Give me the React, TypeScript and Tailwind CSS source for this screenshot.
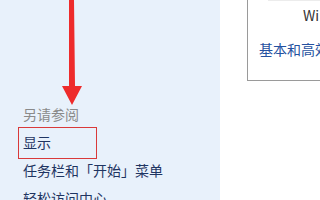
import type { ReactNode } from 'react'

const FONT = '"Noto Sans CJK SC", "Noto Sans", sans-serif'

const links = ['显示', '任务栏和「开始」菜单', '轻松访问中心']

function Item({ children }: { children: ReactNode }) {
  return (
    <li className="flex h-[28px] items-center whitespace-nowrap pl-[23px] text-[14px] text-[#1f3562]">
      {children}
    </li>
  )
}

export default function App() {
  return (
    <div
      className="relative flex h-[200px] w-[320px] overflow-hidden bg-white"
      style={{ fontFamily: FONT }}
    >
      {/* 左侧导航栏 */}
      <aside className="flex w-[220px] shrink-0 flex-col bg-[#e8f1fb] pt-[104px]">
        <p className="mb-[3px] flex h-[28px] items-center pl-[23px] text-[14px] text-[#8a8a8a]">另请参阅</p>
        <ul>
          {links.map((l) => (
            <Item key={l}>{l}</Item>
          ))}
        </ul>
      </aside>

      {/* 右侧内容 */}
      <main className="flex flex-1 flex-col pl-[27px]">
        <div className="flex h-[87px] flex-col border-b border-l border-[#9a9a9a]">
          <div className="ml-[20px] h-px bg-[#ececec]" />
          <p className="mt-[6px] pl-[55px] text-[14px] leading-[16px] text-[#333]">Windows</p>
          <p className="mt-[18px] whitespace-nowrap pl-[11px] text-[14px] leading-[16px] text-[#2451a0]">
            基本和高效主题
          </p>
          <div className="mt-auto flex justify-end">
            <div className="h-[3px] w-[22px] bg-[#1f4e9c]" />
          </div>
        </div>
        <div className="mt-[78px] flex flex-col items-end gap-[5px]">
          <div className="h-[18px] w-[4px] border-y border-l border-[#dcdcdc]" />
          <div className="h-[18px] w-[4px] border-t border-l border-[#dcdcdc]" />
        </div>
      </main>

      {/* 标注：红色箭头 */}
      <svg className="pointer-events-none absolute left-[60px] top-0" width="24" height="106" viewBox="0 0 24 106">
        <polygon points="9,0 14,0 15,86 22,86 12,105 2,86 9,86" fill="#ee2b2b" />
      </svg>

      {/* 标注：红框 */}
      <div className="pointer-events-none absolute left-[18px] top-[127px] h-[32px] w-[79px] border border-[#d93a3a]" />
    </div>
  )
}
